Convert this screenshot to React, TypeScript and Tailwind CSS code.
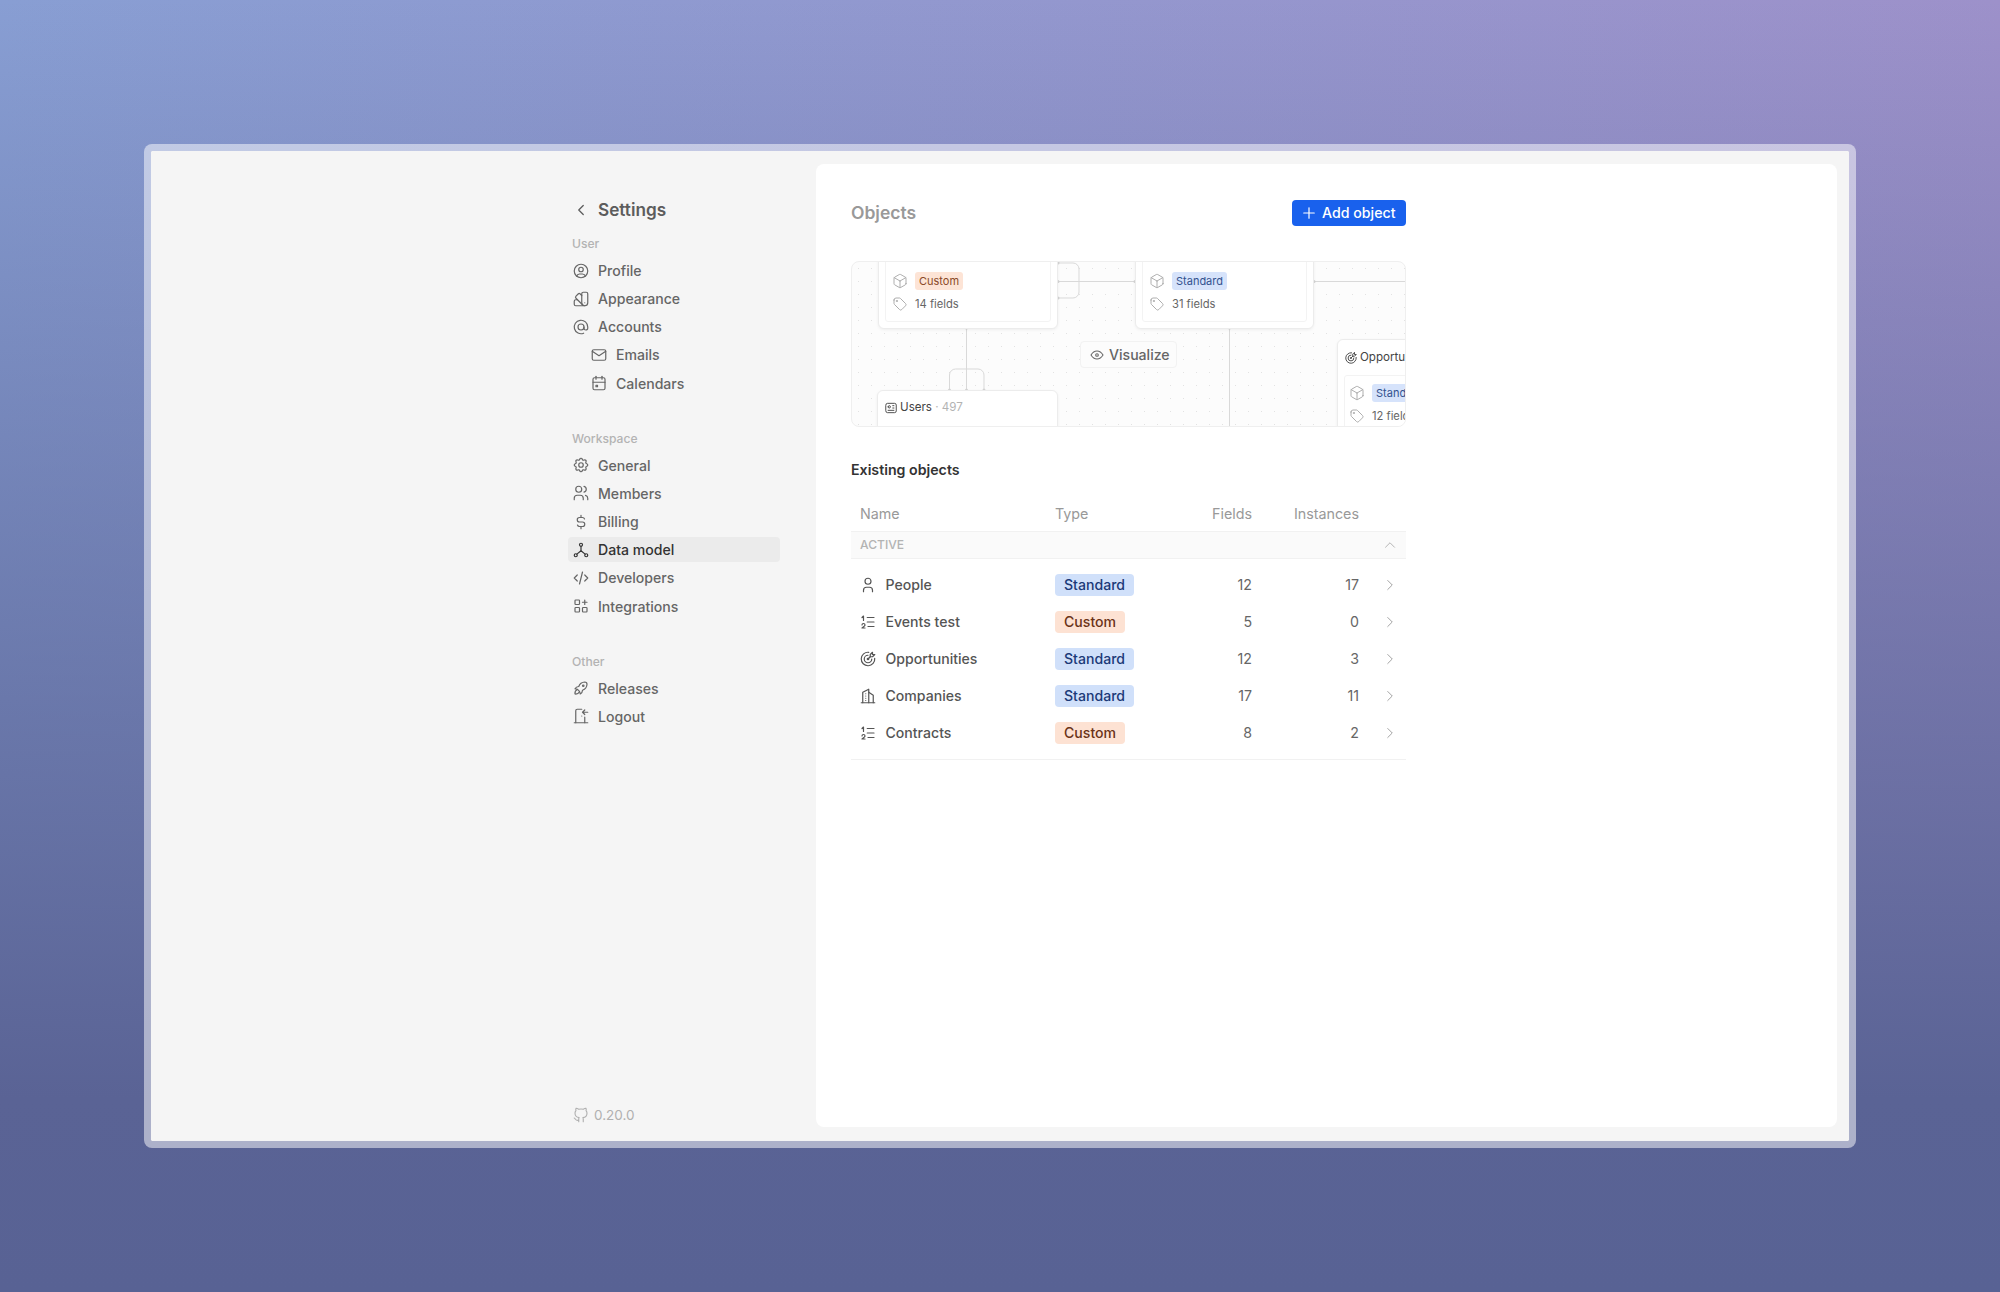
import React from 'react'
import {
  TbApps,
  TbAt,
  TbBrandGithub,
  TbBuildingSkyscraper,
  TbCalendarEvent,
  TbChevronLeft,
  TbChevronRight,
  TbChevronUp,
  TbCode,
  TbColorSwatch,
  TbCube,
  TbCurrencyDollar,
  TbDoorEnter,
  TbEye,
  TbHierarchy,
  TbId,
  TbListNumbers,
  TbMail,
  TbPlus,
  TbRocket,
  TbSettings,
  TbTag,
  TbTargetArrow,
  TbUser,
  TbUserCircle,
  TbUsers,
} from 'react-icons/tb'

type IconType = React.ComponentType<{ size?: number; strokeWidth?: number; className?: string }>

const sections: { label: string; items: { name: string; icon: IconType; nested?: boolean; active?: boolean }[] }[] = [
  {
    label: 'User',
    items: [
      { name: 'Profile', icon: TbUserCircle },
      { name: 'Appearance', icon: TbColorSwatch },
      { name: 'Accounts', icon: TbAt },
      { name: 'Emails', icon: TbMail, nested: true },
      { name: 'Calendars', icon: TbCalendarEvent, nested: true },
    ],
  },
  {
    label: 'Workspace',
    items: [
      { name: 'General', icon: TbSettings },
      { name: 'Members', icon: TbUsers },
      { name: 'Billing', icon: TbCurrencyDollar },
      { name: 'Data model', icon: TbHierarchy, active: true },
      { name: 'Developers', icon: TbCode },
      { name: 'Integrations', icon: TbApps },
    ],
  },
  {
    label: 'Other',
    items: [
      { name: 'Releases', icon: TbRocket },
      { name: 'Logout', icon: TbDoorEnter },
    ],
  },
]

const objects: { name: string; icon: IconType; type: 'Standard' | 'Custom'; fields: number; instances: number }[] = [
  { name: 'People', icon: TbUser, type: 'Standard', fields: 12, instances: 17 },
  { name: 'Events test', icon: TbListNumbers, type: 'Custom', fields: 5, instances: 0 },
  { name: 'Opportunities', icon: TbTargetArrow, type: 'Standard', fields: 12, instances: 3 },
  { name: 'Companies', icon: TbBuildingSkyscraper, type: 'Standard', fields: 17, instances: 11 },
  { name: 'Contracts', icon: TbListNumbers, type: 'Custom', fields: 8, instances: 2 },
]

const gridCols = 'grid grid-cols-[196px_106px_106px_108px_39px] items-center'

const Sidebar = () => (
  <aside className="flex w-[665px] shrink-0 flex-col justify-between pb-[3px] pl-[417px] pr-[36px] pt-[46px]">
    <div className="flex flex-col">
      <div className="flex h-[25px] items-center gap-[8px] px-[4px] text-[#5c5c5c]">
        <TbChevronLeft size={18} strokeWidth={1.7} />
        <span className="text-[17.2px] font-semibold">Settings</span>
      </div>
      <div className="mt-[14px] flex flex-col gap-[34px]">
        {sections.map((section) => (
          <div key={section.label} className="flex flex-col">
            <div className="mb-[5px] flex h-[17px] items-center pl-[4px] text-[12.1px] font-medium text-[#b3b3b3]">
              {section.label}
            </div>
            <div className="mb-[1px] flex flex-col gap-[3.2px]">
              {section.items.map((item) => {
                const Icon = item.icon
                return (
                  <div
                    key={item.name}
                    className={
                      'flex h-[25px] items-center gap-[8px] rounded-[4px] pr-[5px] text-[14.1px] font-medium ' +
                      (item.nested ? 'pl-[22px] ' : 'pl-[4px] ') +
                      (item.active ? 'bg-[#ebebeb] text-[#333333]' : 'text-[#666666]')
                    }
                  >
                    <Icon size={18} strokeWidth={1.6} />
                    <span>{item.name}</span>
                  </div>
                )
              })}
            </div>
          </div>
        ))}
      </div>
    </div>
    <div className="flex h-[18px] items-center gap-[4px] pl-[4px] text-[13.5px] text-[#b0b0b0]">
      <TbBrandGithub size={18} strokeWidth={1.5} />
      <span>0.20.0</span>
    </div>
  </aside>
)

const Badge = ({ type, small }: { type: 'Standard' | 'Custom'; small?: boolean }) => (
  <span
    className={
      'inline-flex items-center ' +
      (small ? 'h-[18px] rounded-[3px] px-[4px] text-[11px] ' : 'h-[22px] rounded-[4px] px-[9px] text-[14.1px] font-medium ') +
      (type === 'Standard'
        ? small
          ? 'bg-[#d6e3fb] text-[#33528f]'
          : 'bg-[#d0e0fa] text-[#1c3a78]'
        : small
          ? 'bg-[#fde4d6] text-[#8a4a28]'
          : 'bg-[#fde2d3] text-[#6b3318]')
    }
  >
    {type}
  </span>
)

const NodeCard = ({ type, fields, className }: { type: 'Standard' | 'Custom'; fields: string; className: string }) => (
  <div className={'absolute rounded-[6px] border border-[#ececec] bg-white p-[6px] shadow-[0_1px_3px_rgba(0,0,0,0.06)] ' + className}>
    <div className="flex h-full flex-col rounded-[3px] border border-[#f3f3f3] pl-[29px] pt-[12px]">
      <div className="relative flex h-[18px] items-center">
        <TbCube size={16} strokeWidth={1.4} className="absolute left-[-23px] text-[#a8a8a8]" />
        <Badge type={type} small />
      </div>
      <div className="relative mt-[5px] flex h-[18px] items-center text-[11.2px] text-[#666666]">
        <TbTag size={16} strokeWidth={1.4} className="absolute left-[-23px] text-[#a8a8a8]" />
        <span>{fields}</span>
      </div>
    </div>
  </div>
)

const Diagram = () => (
  <div className="relative mt-[35px] h-[166px] overflow-hidden rounded-[8px] border border-[#efefef] bg-[#fcfcfc] bg-[radial-gradient(#e2e2e2_0.7px,transparent_0.8px)] bg-[length:13px_13px]">
    <svg className="absolute left-[-1px] top-[-1px]" width="555" height="166" fill="none" stroke="#d9d9d9" strokeWidth="1">
      <path d="M207 2h15a6 6 0 0 1 6 6v23a6 6 0 0 1-6 6h-15" />
      <path d="M207 20.5h77" />
      <path d="M463 20.5h92" />
      <path d="M115.5 67v62" />
      <path d="M98.5 129v-15a6 6 0 0 1 6-6h22.5a6 6 0 0 1 6 6v15" />
      <path d="M378.5 67v99" />
      <g fill="#d4d4d4" stroke="none">
        <circle cx="207" cy="2" r="1.5" />
        <circle cx="207" cy="20.5" r="1.5" />
        <circle cx="207" cy="37" r="1.5" />
        <circle cx="284" cy="20.5" r="1.5" />
        <circle cx="463" cy="20.5" r="1.5" />
        <circle cx="115.5" cy="67" r="1.5" />
        <circle cx="378.5" cy="67" r="1.5" />
        <circle cx="98.5" cy="129" r="1.5" />
        <circle cx="115.5" cy="129" r="1.5" />
        <circle cx="133" cy="129" r="1.5" />
      </g>
    </svg>
    <NodeCard type="Custom" fields="14 fields" className="left-[26px] top-[-10px] h-[77px] w-[180px]" />
    <NodeCard type="Standard" fields="31 fields" className="left-[283px] top-[-10px] h-[77px] w-[179px]" />
    <div className="absolute left-[228px] top-[79px] flex h-[27px] w-[97px] items-center gap-[4px] rounded-[4px] border border-[#f2f2f2] bg-[#fcfcfc] pl-[8px] text-[14.1px] font-medium text-[#666666]">
      <TbEye size={16} strokeWidth={1.6} />
      <span>Visualize</span>
    </div>
    <div className="absolute left-[25px] top-[128px] h-[60px] w-[181px] rounded-[6px] border border-[#ececec] bg-white pl-[6px] pt-[8px] shadow-[0_1px_3px_rgba(0,0,0,0.06)]">
      <div className="flex h-[18px] items-center gap-[2px] text-[11.6px] text-[#444444]">
        <TbId size={14} strokeWidth={1.6} />
        <span>
          Users <span className="text-[#b3b3b3]">· 497</span>
        </span>
      </div>
    </div>
    <div className="absolute left-[485px] top-[77px] h-[110px] w-[180px] rounded-[6px] border border-[#ececec] bg-white pl-[6px] pt-[9px] shadow-[0_1px_3px_rgba(0,0,0,0.06)]">
      <div className="flex h-[18px] items-center gap-[2px] text-[11.6px] text-[#444444]">
        <TbTargetArrow size={14} strokeWidth={1.6} />
        <span>Opportunities</span>
      </div>
      <div className="mt-[8px] h-[70px] rounded-[3px] border border-[#f3f3f3] pl-[27px] pt-[8px]">
        <div className="relative flex h-[18px] items-center">
          <TbCube size={16} strokeWidth={1.4} className="absolute left-[-23px] text-[#a8a8a8]" />
          <Badge type="Standard" small />
        </div>
        <div className="relative mt-[5px] flex h-[18px] items-center text-[11.2px] text-[#666666]">
          <TbTag size={16} strokeWidth={1.4} className="absolute left-[-23px] text-[#a8a8a8]" />
          <span>12 fields</span>
        </div>
      </div>
    </div>
  </div>
)

const ObjectsTable = () => (
  <div className="mt-[15px]">
    <div className={gridCols + ' h-[36px] pt-[1px] text-[14.3px] font-normal text-[#999999]'}>
      <div className="pl-[9px]">Name</div>
      <div className="pl-[8px]">Type</div>
      <div className="pr-[7px] text-right">Fields</div>
      <div className="pr-[8px] text-right">Instances</div>
      <div />
    </div>
    <div className="flex h-[28px] items-center justify-between border-y border-[#f1f1f1] bg-[#fafafa] pl-[9px] pr-[7px] text-[12.1px] font-medium text-[#b3b3b3]">
      <span>ACTIVE</span>
      <TbChevronUp size={18} strokeWidth={1.3} />
    </div>
    <div className="border-b border-[#f1f1f1] pb-[7px] pt-[7.5px]">
      {objects.map((obj) => {
        const Icon = obj.icon
        return (
          <div key={obj.name} className={gridCols + ' h-[37px] text-[14.2px] font-normal text-[#666666]'}>
            <div className="flex items-center gap-[8.5px] pl-[8px] text-[14.1px] font-medium text-[#555555]">
              <Icon size={18} strokeWidth={1.6} />
              <span>{obj.name}</span>
            </div>
            <div className="pl-[8px]">
              <Badge type={obj.type} />
            </div>
            <div className="pr-[7px] text-right">{obj.fields}</div>
            <div className="pr-[8px] text-right">{obj.instances}</div>
            <div className="flex justify-end pr-[7px] text-[#a0a0a0]">
              <TbChevronRight size={18} strokeWidth={1.3} />
            </div>
          </div>
        )
      })}
    </div>
  </div>
)

export default function App() {
  return (
    <div className="h-[1292px] overflow-hidden bg-[linear-gradient(180deg,rgba(90,100,150,0)_0%,rgba(90,100,150,0.55)_45%,#5a6395_85%,#586294_100%),linear-gradient(90deg,#889ed3,#9d91ca)] px-[144px] pt-[144px] font-['Inter',sans-serif]">
      <div className="flex h-[1004px] rounded-[8px] border-[7px] border-white/50 bg-[#f5f5f5] bg-clip-padding pb-[14px] pr-[12px]">
        <Sidebar />
        <main className="mt-[13px] flex-1 rounded-[8px] bg-white px-[35px] pt-[36px]">
          <div className="w-[555px]">
            <div className="flex h-[26px] items-center justify-between">
              <h1 className="text-[17.5px] font-semibold text-[#999999]">Objects</h1>
              <button className="flex h-[26px] w-[114px] items-center gap-[4px] rounded-[4px] bg-[#1961ed] pl-[8px] text-[14.2px] font-medium text-white">
                <TbPlus size={18} strokeWidth={1.6} />
                <span>Add object</span>
              </button>
            </div>
            <Diagram />
            <h2 className="mt-[33px] flex h-[20px] items-center text-[14.2px] font-semibold text-[#333333]">Existing objects</h2>
            <ObjectsTable />
          </div>
        </main>
      </div>
    </div>
  )
}
